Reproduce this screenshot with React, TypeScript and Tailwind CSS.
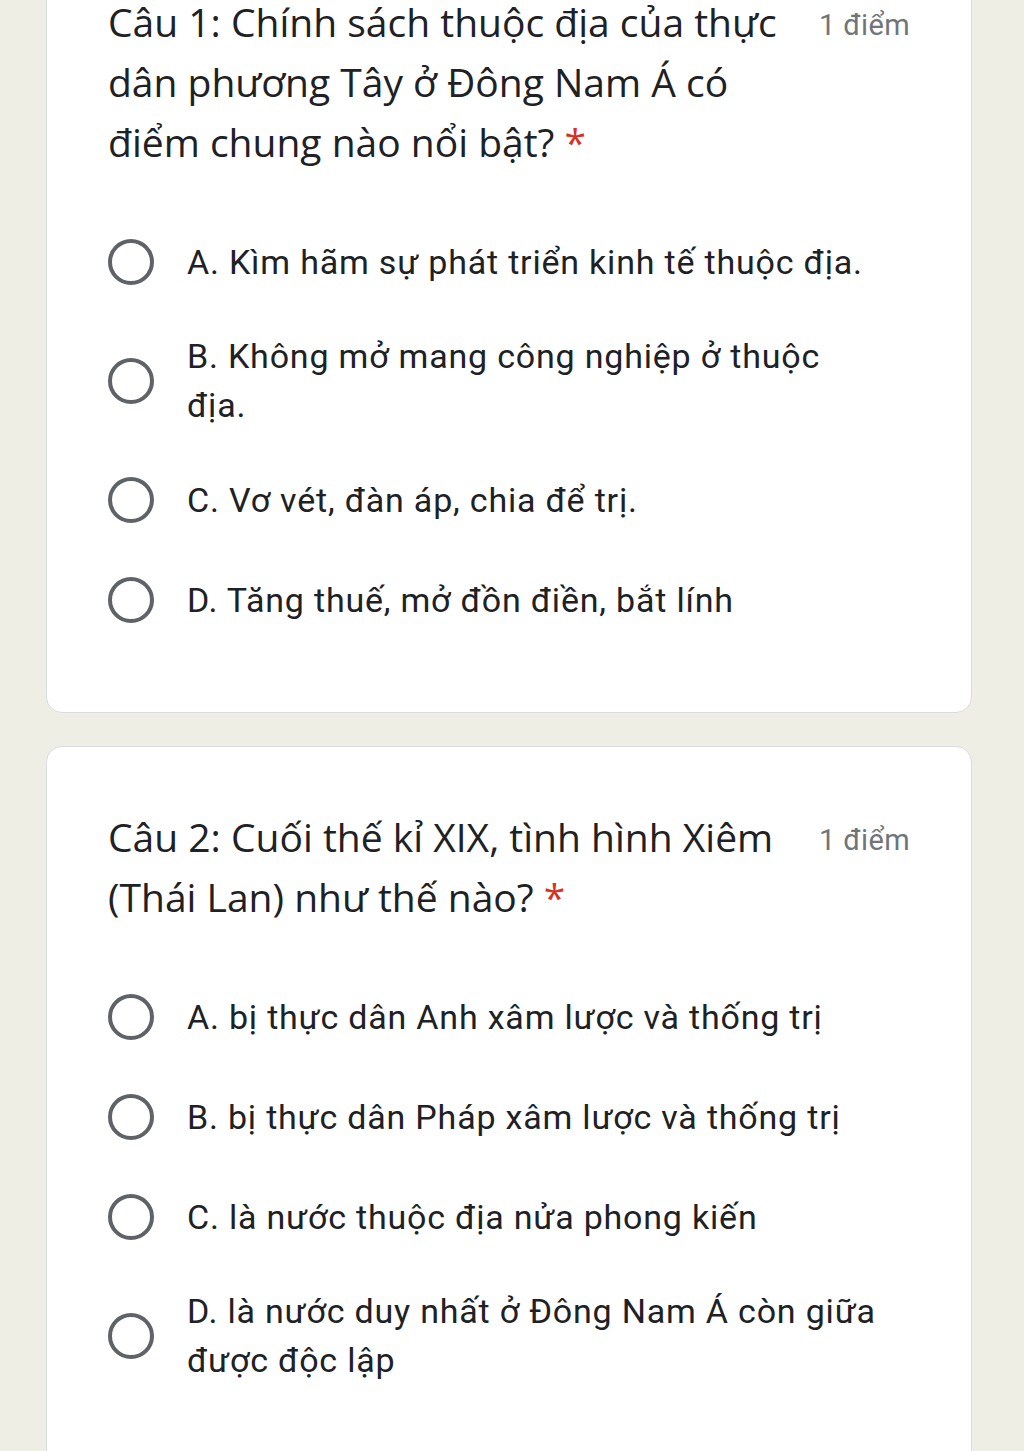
import React from 'react';

interface Question {
  title: string;
  points: string;
  options: string[];
}

const questions: Question[] = [
  {
    title: 'Câu 1: Chính sách thuộc địa của thực dân phương Tây ở Đông Nam Á có điểm chung nào nổi bật?',
    points: '1 điểm',
    options: [
      'A. Kìm hãm sự phát triển kinh tế thuộc địa.',
      'B. Không mở mang công nghiệp ở thuộc địa.',
      'C. Vơ vét, đàn áp, chia để trị.',
      'D. Tăng thuế, mở đồn điền, bắt lính',
    ],
  },
  {
    title: 'Câu 2: Cuối thế kỉ XIX, tình hình Xiêm (Thái Lan) như thế nào?',
    points: '1 điểm',
    options: [
      'A. bị thực dân Anh xâm lược và thống trị',
      'B. bị thực dân Pháp xâm lược và thống trị',
      'C. là nước thuộc địa nửa phong kiến',
      'D. là nước duy nhất ở Đông Nam Á còn giữa được độc lập',
    ],
  },
];

const Radio = () => (
  <div className="w-[46px] h-[46px] shrink-0 rounded-full border-[4px] border-[#5f6368]" />
);

const QuestionCard = ({ q, className }: { q: Question; className?: string }) => (
  <div
    className={`bg-white border border-[#dadce0] rounded-[16px] pl-[61px] pr-[61px] pt-[60px] pb-[62px] ${className ?? ''}`}
  >
    <div className="flex items-start gap-[40px]">
      <div className="flex-1 text-[39px] leading-[60px] text-[#202124] font-['Open_Sans',sans-serif]">
        {q.title} <span className="text-[#d93025]">*</span>
      </div>
      <div className="shrink-0 pt-[3px] text-[29px] leading-[60px] tracking-[0.4px] text-[#70757a] font-['Roboto',sans-serif]">
        {q.points}
      </div>
    </div>
    <div className="mt-[40px] flex flex-col">
      {q.options.map((opt) => (
        <div key={opt} className="flex items-center gap-[33px] min-h-[100px] py-[20px]">
          <Radio />
          <div className="flex-1 pr-[28px] text-[34px] leading-[49px] tracking-[0.8px] text-[#202124] font-['Roboto',sans-serif]">
            {opt}
          </div>
        </div>
      ))}
    </div>
  </div>
);

export default function App() {
  return (
    <div className="h-[1451px] overflow-hidden bg-[#efeee5] pl-[46px] pr-[52px]">
      <QuestionCard q={questions[0]} className="-mt-[69px]" />
      <QuestionCard q={questions[1]} className="mt-[33px] pb-[120px]" />
    </div>
  );
}
